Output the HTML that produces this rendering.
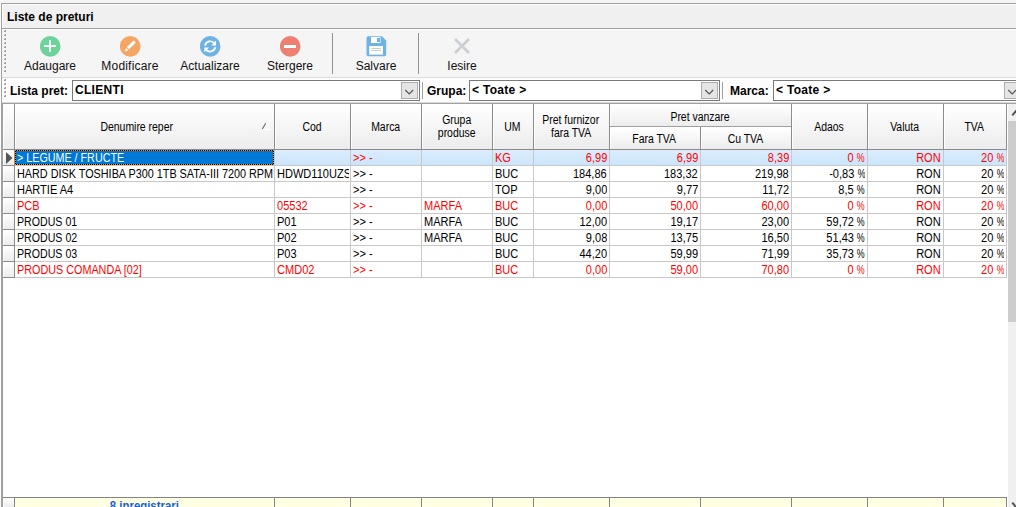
<!DOCTYPE html><html><head><meta charset="utf-8"><style>
*{margin:0;padding:0;box-sizing:border-box}
html,body{width:1016px;height:507px;overflow:hidden;background:#f0f0f0;font-family:"Liberation Sans",sans-serif;position:relative}
.ab{position:absolute}
.tb{font-size:12px;line-height:14px;color:#111;text-align:center;white-space:nowrap}
.lbl{font-size:12px;font-weight:bold;line-height:14px;color:#000;white-space:nowrap}
.inp{position:absolute;background:#fff;border:1px solid #7a7a7a}
.inp span{position:absolute;left:2px;top:2px;font-size:12px;font-weight:bold;line-height:14px;white-space:nowrap;letter-spacing:.3px}
.dd{position:absolute;width:17px;height:17px;background:#e5e5e5;border:1px solid #adadad}
.hd{position:absolute;font-size:12px;line-height:13px;color:#000;text-align:center;white-space:nowrap}
.hd span{display:inline-block;transform:scaleX(.87);transform-origin:50% 0}
.c{position:absolute;font-size:12px;line-height:15px;white-space:nowrap;overflow:hidden;height:15px}
.c span{display:inline-block;transform:scaleX(.92);transform-origin:0 0}
.r{text-align:right}
.r span{transform-origin:100% 0}
.pc{display:inline-block;width:8.6px;font-style:normal;transform:scaleX(.8);transform-origin:0 50%}
</style></head><body>
<div class="ab" style="left:0;top:0;width:1016px;height:3px;background:#f5f5f5"></div>
<div class="ab" style="left:0;top:3px;width:1px;height:504px;background:#fff"></div>
<div class="ab" style="left:1px;top:3px;width:1015px;height:504px;border-left:1px solid #a0a0a0;border-top:1px solid #a0a0a0;background:#f0f0f0"></div>
<div class="ab" style="left:2px;top:4px;width:1014px;height:1px;background:#fff"></div>
<div class="ab" style="left:2px;top:4px;width:1px;height:24px;background:#fff"></div>
<div class="ab" style="left:7px;top:10px;font-size:12px;font-weight:bold;line-height:14px;white-space:nowrap">Liste de preturi</div>
<div class="ab" style="left:2px;top:28px;width:1014px;height:1px;background:#a0a0a0"></div>
<div class="ab" style="left:2px;top:29px;width:1014px;height:1px;background:#fff"></div>
<div class="ab" style="left:2px;top:30px;width:1014px;height:47px;background:#f5f5f5"></div>
<div class="ab" style="left:2px;top:77px;width:1014px;height:1px;background:#dcdcdc"></div>
<div class="ab" style="left:2px;top:78px;width:1014px;height:25px;background:#fcfcfc"></div>
<div class="ab" style="left:4px;top:30px;width:2px;height:2px;background:#a0a0a0"></div><div class="ab" style="left:4px;top:30px;width:1px;height:1px;background:#d8d8d8"></div>
<div class="ab" style="left:4px;top:34px;width:2px;height:2px;background:#a0a0a0"></div><div class="ab" style="left:4px;top:34px;width:1px;height:1px;background:#d8d8d8"></div>
<div class="ab" style="left:4px;top:38px;width:2px;height:2px;background:#a0a0a0"></div><div class="ab" style="left:4px;top:38px;width:1px;height:1px;background:#d8d8d8"></div>
<div class="ab" style="left:4px;top:42px;width:2px;height:2px;background:#a0a0a0"></div><div class="ab" style="left:4px;top:42px;width:1px;height:1px;background:#d8d8d8"></div>
<div class="ab" style="left:4px;top:46px;width:2px;height:2px;background:#a0a0a0"></div><div class="ab" style="left:4px;top:46px;width:1px;height:1px;background:#d8d8d8"></div>
<div class="ab" style="left:4px;top:50px;width:2px;height:2px;background:#a0a0a0"></div><div class="ab" style="left:4px;top:50px;width:1px;height:1px;background:#d8d8d8"></div>
<div class="ab" style="left:4px;top:54px;width:2px;height:2px;background:#a0a0a0"></div><div class="ab" style="left:4px;top:54px;width:1px;height:1px;background:#d8d8d8"></div>
<div class="ab" style="left:4px;top:58px;width:2px;height:2px;background:#a0a0a0"></div><div class="ab" style="left:4px;top:58px;width:1px;height:1px;background:#d8d8d8"></div>
<div class="ab" style="left:4px;top:62px;width:2px;height:2px;background:#a0a0a0"></div><div class="ab" style="left:4px;top:62px;width:1px;height:1px;background:#d8d8d8"></div>
<div class="ab" style="left:4px;top:66px;width:2px;height:2px;background:#a0a0a0"></div><div class="ab" style="left:4px;top:66px;width:1px;height:1px;background:#d8d8d8"></div>
<div class="ab" style="left:4px;top:70px;width:2px;height:2px;background:#a0a0a0"></div><div class="ab" style="left:4px;top:70px;width:1px;height:1px;background:#d8d8d8"></div>
<div class="ab" style="left:4px;top:79px;width:2px;height:2px;background:#a0a0a0"></div><div class="ab" style="left:4px;top:79px;width:1px;height:1px;background:#d8d8d8"></div>
<div class="ab" style="left:4px;top:83px;width:2px;height:2px;background:#a0a0a0"></div><div class="ab" style="left:4px;top:83px;width:1px;height:1px;background:#d8d8d8"></div>
<div class="ab" style="left:4px;top:87px;width:2px;height:2px;background:#a0a0a0"></div><div class="ab" style="left:4px;top:87px;width:1px;height:1px;background:#d8d8d8"></div>
<div class="ab" style="left:4px;top:91px;width:2px;height:2px;background:#a0a0a0"></div><div class="ab" style="left:4px;top:91px;width:1px;height:1px;background:#d8d8d8"></div>
<div class="ab" style="left:4px;top:95px;width:2px;height:2px;background:#a0a0a0"></div><div class="ab" style="left:4px;top:95px;width:1px;height:1px;background:#d8d8d8"></div>
<div class="ab tb" style="left:0px;top:59px;width:100px">Adaugare</div>
<div class="ab tb" style="left:80px;top:59px;width:100px;letter-spacing:.2px">Modificare</div>
<div class="ab tb" style="left:160px;top:59px;width:100px">Actualizare</div>
<div class="ab tb" style="left:240px;top:59px;width:100px">Stergere</div>
<div class="ab tb" style="left:326px;top:59px;width:100px">Salvare</div>
<div class="ab tb" style="left:412px;top:59px;width:100px">Iesire</div>
<svg class="ab" style="left:40px;top:36px" width="21" height="21" viewBox="0 0 21 21"><circle cx="10.2" cy="10.4" r="10.3" fill="#6dd39b"/><rect x="4" y="9.2" width="12" height="1.8" fill="#fff"/><rect x="9.1" y="4" width="1.8" height="12" fill="#fff"/></svg>
<svg class="ab" style="left:120px;top:36px" width="21" height="21" viewBox="0 0 21 21"><circle cx="10.2" cy="10.4" r="10.3" fill="#f4a764"/><path d="M6.9 11.1 L9.1 13.3 L15.8 6.6 L13.6 4.4 Z" fill="#fff"/><path d="M6.2 11.9 L8.4 14.1 L4.5 15.7 Z" fill="#fff"/></svg>
<svg class="ab" style="left:200px;top:36px" width="21" height="21" viewBox="0 0 21 21"><circle cx="10.2" cy="10.4" r="10.3" fill="#6fb3e3"/><path d="M5 9.6 A5.3 5.3 0 0 1 14.6 7.6" stroke="#fff" stroke-width="1.7" fill="none"/><path d="M16 4.6 L16 9.4 L11.4 9.4 Z" fill="#fff"/><path d="M15.4 11.2 A5.3 5.3 0 0 1 5.8 13.2" stroke="#fff" stroke-width="1.7" fill="none"/><path d="M4.4 16.2 L4.4 11.4 L9 11.4 Z" fill="#fff"/></svg>
<svg class="ab" style="left:280px;top:36px" width="21" height="21" viewBox="0 0 21 21"><circle cx="10.2" cy="10.4" r="10.3" fill="#ee8073"/><rect x="4" y="9" width="12" height="3" fill="#fff"/></svg>
<svg class="ab" style="left:366px;top:36px" width="21" height="21" viewBox="0 0 21 21"><path d="M2 0.3 H16 L20.2 4.5 V18.5 A1.8 1.8 0 0 1 18.4 20.3 H2.3 A1.8 1.8 0 0 1 0.5 18.5 V2.1 A1.8 1.8 0 0 1 2 0.3 Z" fill="#6fb3e3"/><rect x="5" y="1" width="9.5" height="6" fill="#fff"/><rect x="11" y="2" width="3" height="4" fill="#6fb3e3"/><rect x="3.2" y="10" width="13.8" height="8.6" fill="#fff"/><rect x="5.3" y="12" width="9.5" height="1" fill="#c6cbd0"/><rect x="5.3" y="14" width="9.5" height="1" fill="#c6cbd0"/></svg>
<svg class="ab" style="left:453px;top:37px" width="18" height="18" viewBox="0 0 18 18"><path d="M2 2 L16 16 M16 2 L2 16" stroke="#cbcfd3" stroke-width="2.8"/></svg>
<div class="ab" style="left:332px;top:33px;width:1px;height:41px;background:#929292"></div>
<div class="ab" style="left:418px;top:33px;width:1px;height:41px;background:#929292"></div>
<div class="ab lbl" style="left:10px;top:84px">Lista pret:</div>
<div class="inp" style="left:72px;top:80px;width:348px;height:21px"><span>CLIENTI</span></div>
<div class="ab" style="left:422px;top:82px;width:1px;height:17px;background:#a0a0a0"></div>
<div class="ab lbl" style="left:427px;top:84px">Grupa:</div>
<div class="inp" style="left:469px;top:80px;width:251px;height:21px"><span>&lt; Toate &gt;</span></div>
<div class="ab" style="left:722px;top:82px;width:1px;height:17px;background:#a0a0a0"></div>
<div class="ab lbl" style="left:730px;top:84px">Marca:</div>
<div class="inp" style="left:773px;top:80px;width:260px;height:21px"><span>&lt; Toate &gt;</span></div>
<div class="dd" style="left:401px;top:82px"><svg class="ab" style="left:2px;top:4px" width="10" height="9" viewBox="0 0 10 9"><path d="M1.2 3 L5.2 7 L9.2 3" stroke="#555" stroke-width="1.2" fill="none"/></svg></div>
<div class="dd" style="left:701px;top:82px"><svg class="ab" style="left:2px;top:4px" width="10" height="9" viewBox="0 0 10 9"><path d="M1.2 3 L5.2 7 L9.2 3" stroke="#555" stroke-width="1.2" fill="none"/></svg></div>
<div class="dd" style="left:1004px;top:82px"><svg class="ab" style="left:2px;top:4px" width="10" height="9" viewBox="0 0 10 9"><path d="M1.2 3 L5.2 7 L9.2 3" stroke="#555" stroke-width="1.2" fill="none"/></svg></div>
<div class="ab" style="left:1px;top:103px;width:1015px;height:404px;background:#fff;border-top:1px solid #a0a0a0;border-left:2px solid #a0a0a0"></div>
<div class="ab" style="left:2px;top:102px;width:1014px;height:1px;background:#dadada"></div>
<div class="ab" style="left:3px;top:104px;width:11px;height:45px;background:linear-gradient(#ffffff,#ececec);border-left:1px solid #fff;border-top:1px solid #fff"></div>
<div class="ab" style="left:15px;top:104px;width:259px;height:45px;background:linear-gradient(#ffffff,#ececec);border-left:1px solid #fff;border-top:1px solid #fff"></div>
<div class="ab" style="left:275px;top:104px;width:75px;height:45px;background:linear-gradient(#ffffff,#ececec);border-left:1px solid #fff;border-top:1px solid #fff"></div>
<div class="ab" style="left:351px;top:104px;width:70px;height:45px;background:linear-gradient(#ffffff,#ececec);border-left:1px solid #fff;border-top:1px solid #fff"></div>
<div class="ab" style="left:422px;top:104px;width:70px;height:45px;background:linear-gradient(#ffffff,#ececec);border-left:1px solid #fff;border-top:1px solid #fff"></div>
<div class="ab" style="left:493px;top:104px;width:40px;height:45px;background:linear-gradient(#ffffff,#ececec);border-left:1px solid #fff;border-top:1px solid #fff"></div>
<div class="ab" style="left:534px;top:104px;width:75px;height:45px;background:linear-gradient(#ffffff,#ececec);border-left:1px solid #fff;border-top:1px solid #fff"></div>
<div class="ab" style="left:792px;top:104px;width:75px;height:45px;background:linear-gradient(#ffffff,#ececec);border-left:1px solid #fff;border-top:1px solid #fff"></div>
<div class="ab" style="left:868px;top:104px;width:75px;height:45px;background:linear-gradient(#ffffff,#ececec);border-left:1px solid #fff;border-top:1px solid #fff"></div>
<div class="ab" style="left:944px;top:104px;width:62px;height:45px;background:linear-gradient(#ffffff,#ececec);border-left:1px solid #fff;border-top:1px solid #fff"></div>
<div class="ab" style="left:610px;top:104px;width:181px;height:22px;background:linear-gradient(#ffffff,#ececec);border-left:1px solid #fff;border-top:1px solid #fff"></div>
<div class="ab" style="left:610px;top:127px;width:90px;height:22px;background:linear-gradient(#ffffff,#ececec);border-left:1px solid #fff;border-top:1px solid #fff"></div>
<div class="ab" style="left:701px;top:127px;width:90px;height:22px;background:linear-gradient(#ffffff,#ececec);border-left:1px solid #fff;border-top:1px solid #fff"></div>
<div class="ab" style="left:3px;top:149px;width:1004px;height:1px;background:#888"></div>
<div class="ab" style="left:14px;top:104px;width:1px;height:45px;background:#8c8c8c"></div>
<div class="ab" style="left:274px;top:104px;width:1px;height:45px;background:#8c8c8c"></div>
<div class="ab" style="left:350px;top:104px;width:1px;height:45px;background:#8c8c8c"></div>
<div class="ab" style="left:421px;top:104px;width:1px;height:45px;background:#8c8c8c"></div>
<div class="ab" style="left:492px;top:104px;width:1px;height:45px;background:#8c8c8c"></div>
<div class="ab" style="left:533px;top:104px;width:1px;height:45px;background:#8c8c8c"></div>
<div class="ab" style="left:609px;top:104px;width:1px;height:45px;background:#8c8c8c"></div>
<div class="ab" style="left:700px;top:104px;width:1px;height:45px;background:#8c8c8c"></div>
<div class="ab" style="left:791px;top:104px;width:1px;height:45px;background:#8c8c8c"></div>
<div class="ab" style="left:867px;top:104px;width:1px;height:45px;background:#8c8c8c"></div>
<div class="ab" style="left:943px;top:104px;width:1px;height:45px;background:#8c8c8c"></div>
<div class="ab" style="left:1006px;top:104px;width:1px;height:45px;background:#8c8c8c"></div>
<div class="ab" style="left:610px;top:126px;width:181px;height:1px;background:#a0a0a0"></div>
<div class="ab" style="left:700px;top:104px;width:1px;height:22px;background:#f5f5f5"></div>
<div class="hd" style="left:14px;top:121px;width:246px"><span>Denumire reper</span></div>
<div class="hd" style="left:274px;top:121px;width:76px"><span>Cod</span></div>
<div class="hd" style="left:350px;top:121px;width:71px"><span>Marca</span></div>
<div class="hd" style="left:421px;top:114px;width:71px"><span>Grupa</span><br><span>produse</span></div>
<div class="hd" style="left:492px;top:121px;width:41px"><span>UM</span></div>
<div class="hd" style="left:533px;top:114px;width:76px"><span>Pret furnizor</span><br><span>fara TVA</span></div>
<div class="hd" style="left:609px;top:111px;width:182px"><span>Pret vanzare</span></div>
<div class="hd" style="left:609px;top:133px;width:91px"><span>Fara TVA</span></div>
<div class="hd" style="left:700px;top:133px;width:91px"><span>Cu TVA</span></div>
<div class="hd" style="left:791px;top:121px;width:76px"><span>Adaos</span></div>
<div class="hd" style="left:867px;top:121px;width:76px"><span>Valuta</span></div>
<div class="hd" style="left:943px;top:121px;width:63px"><span>TVA</span></div>
<svg class="ab" style="left:261px;top:122px" width="10" height="9" viewBox="0 0 10 9"><path d="M5 1 L8.5 7.5 L1 7.5" fill="none" stroke="#ffffff" stroke-width="1.2"/><path d="M1.2 7 L4.8 1.2" fill="none" stroke="#6a6a6a" stroke-width="1.1"/></svg>
<div class="ab" style="left:3px;top:150px;width:11px;height:15px;background:linear-gradient(#ffffff,#ececec);border-left:1px solid #fff;border-top:1px solid #fff"></div>
<div class="ab" style="left:3px;top:165px;width:11px;height:1px;background:#8c8c8c"></div>
<div class="ab" style="left:15px;top:150px;width:992px;height:15px;background:linear-gradient(#dcedfc,#cbe5fb)"></div>
<div class="ab" style="left:15px;top:165px;width:992px;height:1px;background:#c8c8c8"></div>
<div class="ab" style="left:15px;top:150px;width:259px;height:15px;background:#0078d7"></div>
<div class="ab" style="left:15px;top:150px;width:259px;height:1px;background:repeating-linear-gradient(90deg,#ff8c1a 0 1px,#000 1px 2px)"></div>
<div class="ab" style="left:15px;top:164px;width:259px;height:1px;background:repeating-linear-gradient(90deg,#ff8c1a 0 1px,#000 1px 2px)"></div>
<div class="ab" style="left:15px;top:150px;width:1px;height:15px;background:repeating-linear-gradient(180deg,#ff8c1a 0 1px,#000 1px 2px)"></div>
<div class="ab" style="left:273px;top:150px;width:1px;height:15px;background:repeating-linear-gradient(180deg,#ff8c1a 0 1px,#000 1px 2px)"></div>
<div class="c" style="left:17px;top:151px;width:256px;color:#fff"><span style="transform:scaleX(.895)">&gt; LEGUME / FRUCTE</span></div>
<div class="c" style="left:353px;top:151px;width:67px;color:#ff0000"><span>&gt;&gt; -</span></div>
<div class="c" style="left:495px;top:151px;width:37px;color:#ff0000"><span>KG</span></div>
<div class="c r" style="left:534px;top:151px;width:73px;color:#ff0000"><span>6,99</span></div>
<div class="c r" style="left:610px;top:151px;width:88px;color:#ff0000"><span>6,99</span></div>
<div class="c r" style="left:701px;top:151px;width:88px;color:#ff0000"><span>8,39</span></div>
<div class="c r" style="left:792px;top:151px;width:73px;color:#ff0000"><span>0 <i class="pc">%</i></span></div>
<div class="c r" style="left:868px;top:151px;width:73px;color:#ff0000"><span>RON</span></div>
<div class="c r" style="left:944px;top:151px;width:60px;color:#ff0000"><span>20 <i class="pc">%</i></span></div>
<div class="ab" style="left:3px;top:166px;width:11px;height:15px;background:linear-gradient(#ffffff,#ececec);border-left:1px solid #fff;border-top:1px solid #fff"></div>
<div class="ab" style="left:3px;top:181px;width:11px;height:1px;background:#8c8c8c"></div>
<div class="ab" style="left:15px;top:181px;width:992px;height:1px;background:#c8c8c8"></div>
<div class="c" style="left:17px;top:167px;width:257px;color:#000"><span style="transform:scaleX(.902)">HARD DISK TOSHIBA P300 1TB SATA-III 7200 RPM</span></div>
<div class="c" style="left:277px;top:167px;width:72px;color:#000"><span>HDWD110UZSVA</span></div>
<div class="c" style="left:353px;top:167px;width:67px;color:#000"><span>&gt;&gt; -</span></div>
<div class="c" style="left:495px;top:167px;width:37px;color:#000"><span>BUC</span></div>
<div class="c r" style="left:534px;top:167px;width:73px;color:#000"><span>184,86</span></div>
<div class="c r" style="left:610px;top:167px;width:88px;color:#000"><span>183,32</span></div>
<div class="c r" style="left:701px;top:167px;width:88px;color:#000"><span>219,98</span></div>
<div class="c r" style="left:792px;top:167px;width:73px;color:#000"><span>-0,83 <i class="pc">%</i></span></div>
<div class="c r" style="left:868px;top:167px;width:73px;color:#000"><span>RON</span></div>
<div class="c r" style="left:944px;top:167px;width:60px;color:#000"><span>20 <i class="pc">%</i></span></div>
<div class="ab" style="left:3px;top:182px;width:11px;height:15px;background:linear-gradient(#ffffff,#ececec);border-left:1px solid #fff;border-top:1px solid #fff"></div>
<div class="ab" style="left:3px;top:197px;width:11px;height:1px;background:#8c8c8c"></div>
<div class="ab" style="left:15px;top:197px;width:992px;height:1px;background:#c8c8c8"></div>
<div class="c" style="left:17px;top:183px;width:256px;color:#000"><span>HARTIE A4</span></div>
<div class="c" style="left:353px;top:183px;width:67px;color:#000"><span>&gt;&gt; -</span></div>
<div class="c" style="left:495px;top:183px;width:37px;color:#000"><span>TOP</span></div>
<div class="c r" style="left:534px;top:183px;width:73px;color:#000"><span>9,00</span></div>
<div class="c r" style="left:610px;top:183px;width:88px;color:#000"><span>9,77</span></div>
<div class="c r" style="left:701px;top:183px;width:88px;color:#000"><span>11,72</span></div>
<div class="c r" style="left:792px;top:183px;width:73px;color:#000"><span>8,5 <i class="pc">%</i></span></div>
<div class="c r" style="left:868px;top:183px;width:73px;color:#000"><span>RON</span></div>
<div class="c r" style="left:944px;top:183px;width:60px;color:#000"><span>20 <i class="pc">%</i></span></div>
<div class="ab" style="left:3px;top:198px;width:11px;height:15px;background:linear-gradient(#ffffff,#ececec);border-left:1px solid #fff;border-top:1px solid #fff"></div>
<div class="ab" style="left:3px;top:213px;width:11px;height:1px;background:#8c8c8c"></div>
<div class="ab" style="left:15px;top:213px;width:992px;height:1px;background:#c8c8c8"></div>
<div class="c" style="left:17px;top:199px;width:256px;color:#ff0000"><span>PCB</span></div>
<div class="c" style="left:277px;top:199px;width:72px;color:#ff0000"><span>05532</span></div>
<div class="c" style="left:353px;top:199px;width:67px;color:#ff0000"><span>&gt;&gt; -</span></div>
<div class="c" style="left:424px;top:199px;width:67px;color:#ff0000"><span>MARFA</span></div>
<div class="c" style="left:495px;top:199px;width:37px;color:#ff0000"><span>BUC</span></div>
<div class="c r" style="left:534px;top:199px;width:73px;color:#ff0000"><span>0,00</span></div>
<div class="c r" style="left:610px;top:199px;width:88px;color:#ff0000"><span>50,00</span></div>
<div class="c r" style="left:701px;top:199px;width:88px;color:#ff0000"><span>60,00</span></div>
<div class="c r" style="left:792px;top:199px;width:73px;color:#ff0000"><span>0 <i class="pc">%</i></span></div>
<div class="c r" style="left:868px;top:199px;width:73px;color:#ff0000"><span>RON</span></div>
<div class="c r" style="left:944px;top:199px;width:60px;color:#ff0000"><span>20 <i class="pc">%</i></span></div>
<div class="ab" style="left:3px;top:214px;width:11px;height:15px;background:linear-gradient(#ffffff,#ececec);border-left:1px solid #fff;border-top:1px solid #fff"></div>
<div class="ab" style="left:3px;top:229px;width:11px;height:1px;background:#8c8c8c"></div>
<div class="ab" style="left:15px;top:229px;width:992px;height:1px;background:#c8c8c8"></div>
<div class="c" style="left:17px;top:215px;width:256px;color:#000"><span style="transform:scaleX(0.885)">PRODUS 01</span></div>
<div class="c" style="left:277px;top:215px;width:72px;color:#000"><span>P01</span></div>
<div class="c" style="left:353px;top:215px;width:67px;color:#000"><span>&gt;&gt; -</span></div>
<div class="c" style="left:424px;top:215px;width:67px;color:#000"><span>MARFA</span></div>
<div class="c" style="left:495px;top:215px;width:37px;color:#000"><span>BUC</span></div>
<div class="c r" style="left:534px;top:215px;width:73px;color:#000"><span>12,00</span></div>
<div class="c r" style="left:610px;top:215px;width:88px;color:#000"><span>19,17</span></div>
<div class="c r" style="left:701px;top:215px;width:88px;color:#000"><span>23,00</span></div>
<div class="c r" style="left:792px;top:215px;width:73px;color:#000"><span>59,72 <i class="pc">%</i></span></div>
<div class="c r" style="left:868px;top:215px;width:73px;color:#000"><span>RON</span></div>
<div class="c r" style="left:944px;top:215px;width:60px;color:#000"><span>20 <i class="pc">%</i></span></div>
<div class="ab" style="left:3px;top:230px;width:11px;height:15px;background:linear-gradient(#ffffff,#ececec);border-left:1px solid #fff;border-top:1px solid #fff"></div>
<div class="ab" style="left:3px;top:245px;width:11px;height:1px;background:#8c8c8c"></div>
<div class="ab" style="left:15px;top:245px;width:992px;height:1px;background:#c8c8c8"></div>
<div class="c" style="left:17px;top:231px;width:256px;color:#000"><span style="transform:scaleX(0.885)">PRODUS 02</span></div>
<div class="c" style="left:277px;top:231px;width:72px;color:#000"><span>P02</span></div>
<div class="c" style="left:353px;top:231px;width:67px;color:#000"><span>&gt;&gt; -</span></div>
<div class="c" style="left:424px;top:231px;width:67px;color:#000"><span>MARFA</span></div>
<div class="c" style="left:495px;top:231px;width:37px;color:#000"><span>BUC</span></div>
<div class="c r" style="left:534px;top:231px;width:73px;color:#000"><span>9,08</span></div>
<div class="c r" style="left:610px;top:231px;width:88px;color:#000"><span>13,75</span></div>
<div class="c r" style="left:701px;top:231px;width:88px;color:#000"><span>16,50</span></div>
<div class="c r" style="left:792px;top:231px;width:73px;color:#000"><span>51,43 <i class="pc">%</i></span></div>
<div class="c r" style="left:868px;top:231px;width:73px;color:#000"><span>RON</span></div>
<div class="c r" style="left:944px;top:231px;width:60px;color:#000"><span>20 <i class="pc">%</i></span></div>
<div class="ab" style="left:3px;top:246px;width:11px;height:15px;background:linear-gradient(#ffffff,#ececec);border-left:1px solid #fff;border-top:1px solid #fff"></div>
<div class="ab" style="left:3px;top:261px;width:11px;height:1px;background:#8c8c8c"></div>
<div class="ab" style="left:15px;top:261px;width:992px;height:1px;background:#c8c8c8"></div>
<div class="c" style="left:17px;top:247px;width:256px;color:#000"><span style="transform:scaleX(0.885)">PRODUS 03</span></div>
<div class="c" style="left:277px;top:247px;width:72px;color:#000"><span>P03</span></div>
<div class="c" style="left:353px;top:247px;width:67px;color:#000"><span>&gt;&gt; -</span></div>
<div class="c" style="left:495px;top:247px;width:37px;color:#000"><span>BUC</span></div>
<div class="c r" style="left:534px;top:247px;width:73px;color:#000"><span>44,20</span></div>
<div class="c r" style="left:610px;top:247px;width:88px;color:#000"><span>59,99</span></div>
<div class="c r" style="left:701px;top:247px;width:88px;color:#000"><span>71,99</span></div>
<div class="c r" style="left:792px;top:247px;width:73px;color:#000"><span>35,73 <i class="pc">%</i></span></div>
<div class="c r" style="left:868px;top:247px;width:73px;color:#000"><span>RON</span></div>
<div class="c r" style="left:944px;top:247px;width:60px;color:#000"><span>20 <i class="pc">%</i></span></div>
<div class="ab" style="left:3px;top:262px;width:11px;height:15px;background:linear-gradient(#ffffff,#ececec);border-left:1px solid #fff;border-top:1px solid #fff"></div>
<div class="ab" style="left:3px;top:277px;width:11px;height:1px;background:#8c8c8c"></div>
<div class="ab" style="left:15px;top:277px;width:992px;height:1px;background:#c8c8c8"></div>
<div class="c" style="left:17px;top:263px;width:256px;color:#ff0000"><span style="transform:scaleX(0.9)">PRODUS COMANDA [02]</span></div>
<div class="c" style="left:277px;top:263px;width:72px;color:#ff0000"><span>CMD02</span></div>
<div class="c" style="left:353px;top:263px;width:67px;color:#ff0000"><span>&gt;&gt; -</span></div>
<div class="c" style="left:495px;top:263px;width:37px;color:#ff0000"><span>BUC</span></div>
<div class="c r" style="left:534px;top:263px;width:73px;color:#ff0000"><span>0,00</span></div>
<div class="c r" style="left:610px;top:263px;width:88px;color:#ff0000"><span>59,00</span></div>
<div class="c r" style="left:701px;top:263px;width:88px;color:#ff0000"><span>70,80</span></div>
<div class="c r" style="left:792px;top:263px;width:73px;color:#ff0000"><span>0 <i class="pc">%</i></span></div>
<div class="c r" style="left:868px;top:263px;width:73px;color:#ff0000"><span>RON</span></div>
<div class="c r" style="left:944px;top:263px;width:60px;color:#ff0000"><span>20 <i class="pc">%</i></span></div>
<div class="ab" style="left:274px;top:150px;width:1px;height:128px;background:#c8c8c8"></div>
<div class="ab" style="left:350px;top:150px;width:1px;height:128px;background:#c8c8c8"></div>
<div class="ab" style="left:421px;top:150px;width:1px;height:128px;background:#c8c8c8"></div>
<div class="ab" style="left:492px;top:150px;width:1px;height:128px;background:#c8c8c8"></div>
<div class="ab" style="left:533px;top:150px;width:1px;height:128px;background:#c8c8c8"></div>
<div class="ab" style="left:609px;top:150px;width:1px;height:128px;background:#c8c8c8"></div>
<div class="ab" style="left:700px;top:150px;width:1px;height:128px;background:#c8c8c8"></div>
<div class="ab" style="left:791px;top:150px;width:1px;height:128px;background:#c8c8c8"></div>
<div class="ab" style="left:867px;top:150px;width:1px;height:128px;background:#c8c8c8"></div>
<div class="ab" style="left:943px;top:150px;width:1px;height:128px;background:#c8c8c8"></div>
<div class="ab" style="left:1006px;top:150px;width:1px;height:128px;background:#c8c8c8"></div>
<div class="ab" style="left:14px;top:150px;width:1px;height:128px;background:#8c8c8c"></div>
<svg class="ab" style="left:6px;top:152px" width="7" height="12" viewBox="0 0 7 12"><path d="M0 0 L6.5 6 L0 12 Z" fill="#555"/></svg>
<div class="ab" style="left:3px;top:497px;width:1004px;height:1px;background:#848484"></div>
<div class="ab" style="left:3px;top:498px;width:11px;height:9px;background:linear-gradient(#ffffff,#ececec);border-left:1px solid #fff;border-top:1px solid #fff"></div>
<div class="ab" style="left:15px;top:498px;width:991px;height:9px;background:#ffffe1"></div>
<div class="ab" style="left:14px;top:498px;width:1px;height:9px;background:#848484"></div>
<div class="ab" style="left:274px;top:498px;width:1px;height:9px;background:#848484"></div>
<div class="ab" style="left:350px;top:498px;width:1px;height:9px;background:#848484"></div>
<div class="ab" style="left:421px;top:498px;width:1px;height:9px;background:#848484"></div>
<div class="ab" style="left:492px;top:498px;width:1px;height:9px;background:#848484"></div>
<div class="ab" style="left:533px;top:498px;width:1px;height:9px;background:#848484"></div>
<div class="ab" style="left:609px;top:498px;width:1px;height:9px;background:#848484"></div>
<div class="ab" style="left:700px;top:498px;width:1px;height:9px;background:#848484"></div>
<div class="ab" style="left:791px;top:498px;width:1px;height:9px;background:#848484"></div>
<div class="ab" style="left:867px;top:498px;width:1px;height:9px;background:#848484"></div>
<div class="ab" style="left:943px;top:498px;width:1px;height:9px;background:#848484"></div>
<div class="ab" style="left:1006px;top:498px;width:1px;height:9px;background:#848484"></div>
<div class="ab" style="left:15px;top:499px;width:259px;text-align:center;font-size:12px;font-weight:bold;line-height:14px;color:#1a5fd0"><span style="display:inline-block;transform:scaleX(.95)">8 inregistrari</span></div>
<div class="ab" style="left:1007px;top:104px;width:9px;height:403px;background:#f0f0f0;border-left:1px solid #fff"></div>
<div class="ab" style="left:1008px;top:121px;width:8px;height:201px;background:#cdcdcd"></div>
<svg class="ab" style="left:1008px;top:104px" width="8" height="16" viewBox="0 0 8 16"><path d="M4.3 11.3 L8.5 6.5" stroke="#505050" stroke-width="2" fill="none"/></svg>
<svg class="ab" style="left:1008px;top:497px" width="8" height="10" viewBox="0 0 8 10"><path d="M4.3 5.7 L8.5 10.5" stroke="#505050" stroke-width="2" fill="none"/></svg>
</body></html>
